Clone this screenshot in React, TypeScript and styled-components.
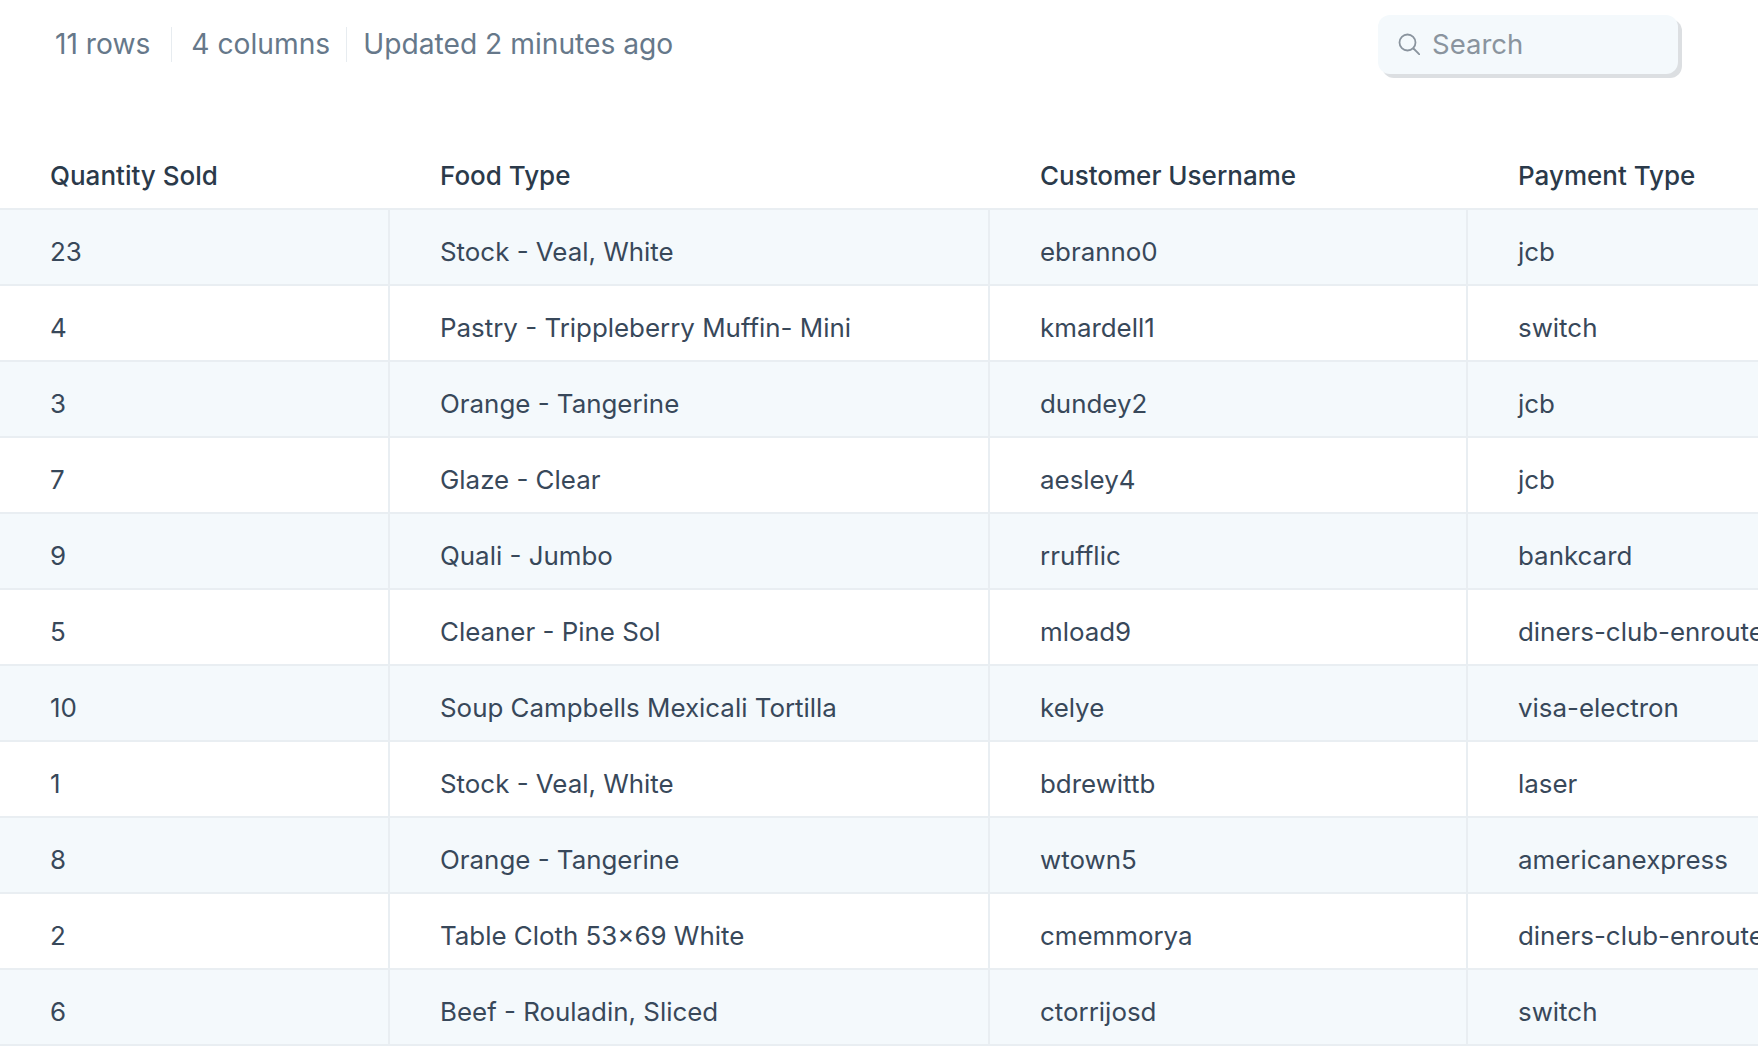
import React from "react";
import styled, { createGlobalStyle } from "styled-components";

const Global = createGlobalStyle`
  html, body { margin: 0; padding: 0; background: #fff; width: 1758px; height: 1050px; overflow: hidden; }
  * { box-sizing: border-box; }
  body { font-family: Inter, "Liberation Sans", sans-serif; }
`;

const Page = styled.div`
  width: 1758px;
  height: 1050px;
  overflow: hidden;
  background: #fff;
`;

const Toolbar = styled.div`
  height: 90px;
  padding: 15px 80px 0 55px;
  display: flex;
  align-items: flex-start;
  justify-content: space-between;
`;

const Stats = styled.div`
  display: flex;
  align-items: center;
  height: 58px;
`;

const Stat = styled.span`
  font-size: 28.2px;
  line-height: 36px;
  color: #66788a;
  padding: 0 16px 0 19px;
  border-left: 1px solid #e7ecf0;
  height: 35px;
  display: flex;
  align-items: center;
  &:first-child { padding: 0 21px 0 0; border-left: 0; }
  &:last-child { padding-left: 16px; }
`;

const SearchBox = styled.div`
  width: 300px;
  height: 59px;
  border-radius: 12px;
  background: #f4f9fc;
  box-shadow: 4px 4px 0 #dcdfe2;
  display: flex;
  align-items: center;
  padding: 0 0 2px 20px;
  gap: 12px;
  color: #8a949e;
  font-size: 27.5px;
`;

const Table = styled.div`
  margin-top: 32px;
  display: flex;
  flex-direction: column;
`;

const Row = styled.div<{ $striped?: boolean; $header?: boolean }>`
  display: grid;
  grid-template-columns: 390px 600px 478px 290px;
  height: ${p => (p.$header ? "88px" : "76px")};
  background: ${p => (p.$striped ? "#f4f9fc" : "#fff")};
  border-bottom: 2px solid #e9eef2;
`;

const Cell = styled.div<{ $header?: boolean }>`
  display: flex;
  align-items: center;
  padding: ${p => (p.$header ? "21px" : "9px")} 0 0 50px;
  font-size: ${p => (p.$header ? "26px" : "25.9px")};
  white-space: nowrap;
  overflow: hidden;
  color: ${p => (p.$header ? "#2b3a4a" : "#38485a")};
  font-weight: ${p => (p.$header ? 500 : 400)};
  &:not(:last-child) { border-right: ${p => (p.$header ? "0" : "2px solid #e9eef2")}; }
`;

const rows = [
  ["23", "Stock - Veal, White", "ebranno0", "jcb"],
  ["4", "Pastry - Trippleberry Muffin- Mini", "kmardell1", "switch"],
  ["3", "Orange - Tangerine", "dundey2", "jcb"],
  ["7", "Glaze - Clear", "aesley4", "jcb"],
  ["9", "Quali - Jumbo", "rrufflic", "bankcard"],
  ["5", "Cleaner - Pine Sol", "mload9", "diners-club-enroute"],
  ["10", "Soup Campbells Mexicali Tortilla", "kelye", "visa-electron"],
  ["1", "Stock - Veal, White", "bdrewittb", "laser"],
  ["8", "Orange - Tangerine", "wtown5", "americanexpress"],
  ["2", "Table Cloth 53×69 White", "cmemmorya", "diners-club-enroute"],
  ["6", "Beef - Rouladin, Sliced", "ctorrijosd", "switch"],
];

const headers = ["Quantity Sold", "Food Type", "Customer Username", "Payment Type"];

export default function App() {
  return (
    <Page>
      <Global />
      <Toolbar>
        <Stats>
          <Stat>11 rows</Stat>
          <Stat>4 columns</Stat>
          <Stat>Updated 2 minutes ago</Stat>
        </Stats>
        <SearchBox>
          <svg width="22" height="22" viewBox="0 0 22 22" fill="none" stroke="#8a949e" strokeWidth="1.8" strokeLinecap="round">
            <circle cx="9.5" cy="9.5" r="8" />
            <path d="M15.5 15.5l6 6" />
          </svg>
          Search
        </SearchBox>
      </Toolbar>
      <Table>
        <Row $header>
          {headers.map(h => <Cell $header key={h}>{h}</Cell>)}
        </Row>
        {rows.map((r, i) => (
          <Row key={i} $striped={i % 2 === 0}>
            {r.map((c, j) => <Cell key={j}>{c}</Cell>)}
          </Row>
        ))}
      </Table>
    </Page>
  );
}
